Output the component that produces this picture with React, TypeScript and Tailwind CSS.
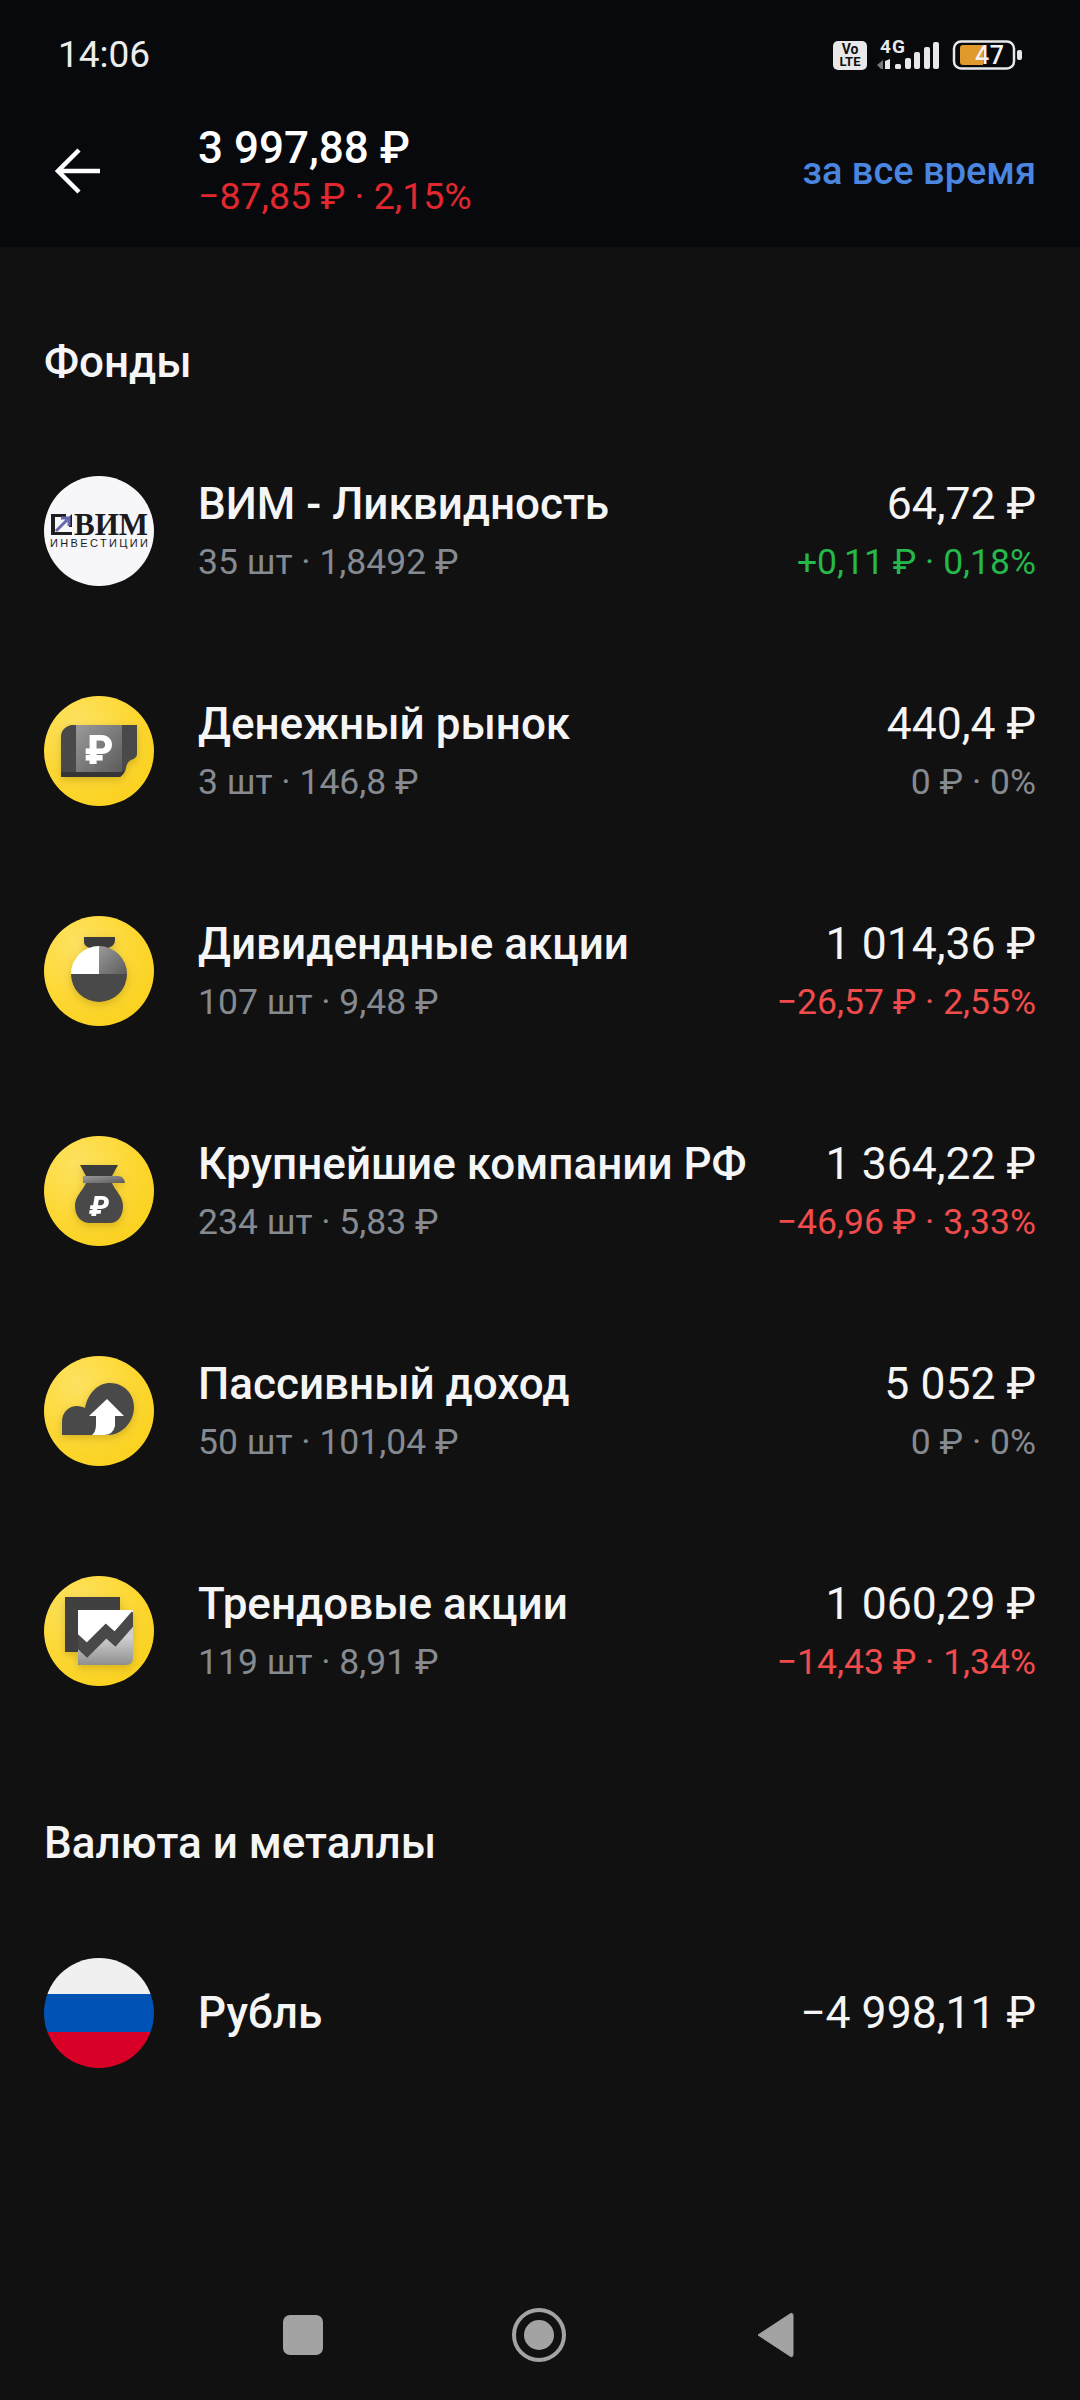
import type { ReactNode } from "react";

type Fund = {
  name: string;
  sub: string;
  total: string;
  change: string;
  tone: "up" | "down" | "flat";
  icon: ReactNode;
};

function YellowDisc({ id, children }: { id: string; children: ReactNode }) {
  return (
    <svg width="110" height="110" viewBox="0 0 110 110" className="shrink-0">
      <defs>
        <radialGradient id={`${id}-bg`} cx="30%" cy="25%" r="80%">
          <stop offset="0" stopColor="#fde261" />
          <stop offset="0.6" stopColor="#fdd835" />
          <stop offset="1" stopColor="#fbd221" />
        </radialGradient>
        <linearGradient id={`${id}-grey`} x1="0" y1="0" x2="1" y2="1">
          <stop offset="0" stopColor="#9a9a9a" />
          <stop offset="1" stopColor="#5c5c5c" />
        </linearGradient>
        <filter id={`${id}-shadow`} x="-20%" y="-20%" width="140%" height="150%">
          <feDropShadow dx="0" dy="3" stdDeviation="4" floodColor="#8a6a00" floodOpacity="0.35" />
        </filter>
      </defs>
      <circle cx="55" cy="55" r="55" fill={`url(#${id}-bg)`} />
      <g filter={`url(#${id}-shadow)`}>{children}</g>
    </svg>
  );
}

function VimIcon() {
  return (
    <svg width="110" height="110" viewBox="0 0 110 110" className="shrink-0">
      <circle cx="55" cy="55" r="55" fill="#f7f7fa" />
      <path d="M7 38H22V41H11V56H28V59H7Z" fill="#1d1d22" />
      <path d="M28 38V51H25V41Z" fill="#1d1d22" />
      <path d="M11 54V45L14 42H23L11 54Z" fill="#f7f7fa" />
      <path d="M12 55L24 43M17 42H25V50" fill="none" stroke="#6a68b0" strokeWidth="3" />
      <text x="30" y="59" fontFamily="Liberation Serif" fontSize="31" fontWeight="700" fill="#1b1b1f" textLength="74" lengthAdjust="spacingAndGlyphs">
        ВИМ
      </text>
      <text x="6" y="71" fontFamily="Liberation Sans" fontSize="11" fill="#1b1b1f" textLength="98">
        ИНВЕСТИЦИИ
      </text>
    </svg>
  );
}

function MoneyIcon() {
  return (
    <YellowDisc id="money">
      <path d="M27 29H93V58Q93 62 87 64Q83 66 82 72Q81 78 76 81H17V40Q17 32 27 29Z" fill="#4a4a4a" />
      <path d="M17 76H77Q80 76 81 72Q80 78 76 81H17Z" fill="#363636" />
      <rect x="32" y="29" width="46" height="47" fill={`url(#money-grey)`} />
      <text x="55" y="68" textAnchor="middle" fontFamily="Roboto" fontSize="40" fontWeight="900" fill="#fff">
        ₽
      </text>
    </YellowDisc>
  );
}

function DividendIcon() {
  return (
    <YellowDisc id="div">
      <path d="M40 21H71V24Q71 30 64 32H46Q40 30 40 26Z" fill="#3a3a3a" />
      <path d="M27 58A28 28 0 0 0 83 58Z" fill="#484848" />
      <path d="M55 58V30A28 28 0 0 1 83 58Z" fill={`url(#div-grey)`} />
      <path d="M55 58V30A28 28 0 0 0 27 58Z" fill="#fff" />
    </YellowDisc>
  );
}

function BagIcon() {
  return (
    <YellowDisc id="bag">
      <path d="M36 29H74L68 40H42Z" fill="#3a3a3a" />
      <path d="M42 47C38 56 31 60 31 70C31 81 38 87 46 87H66C73 87 79 81 79 70C79 60 72 56 68 47Z" fill="#484848" />
      <path d="M39 40H74Q80 40 81 47H39Z" fill={`url(#bag-grey)`} />
      <text x="55" y="80" textAnchor="middle" fontFamily="Roboto" fontSize="28" fontWeight="900" fontStyle="italic" fill="#fff">
        ₽
      </text>
    </YellowDisc>
  );
}

function CloudIcon() {
  return (
    <YellowDisc id="cloud">
      <path d="M18 79V66C18 56 25 50 33 50C36 50 39 51 41 52C44 37 54 27 66 27C80 27 90 38 90 51C90 66 78 79 64 79Z" fill="#484848" />
      <path d="M63 43L80 60H71V70Q69 79 60 79H48Q52 76 52 68V60H45Z" fill="#fff" />
    </YellowDisc>
  );
}

function TrendIcon() {
  return (
    <YellowDisc id="trend">
      <rect x="21" y="21" width="55" height="55" fill="#3f3f3f" />
      <defs>
        <linearGradient id="trend-card" x1="0" y1="0" x2="0" y2="1">
          <stop offset="0.5" stopColor="#cfcfcf" />
          <stop offset="1" stopColor="#8f8f8f" />
        </linearGradient>
        <clipPath id="trend-clip">
          <path d="M34 34H89V82Q89 89 82 89H34Z" />
        </clipPath>
      </defs>
      <g clipPath="url(#trend-clip)">
        <path d="M34 34H89V89H34Z" fill={`url(#trend-card)`} />
        <path d="M34 34H89V41L71 62L62 54L43 72L34 64Z" fill="#fff" />
        <path d="M30 62L43 74L62 55L71 63L92 39" fill="none" stroke="#484848" strokeWidth="11" />
      </g>
    </YellowDisc>
  );
}

function FlagIcon() {
  return (
    <svg width="110" height="110" viewBox="0 0 110 110" className="shrink-0">
      <clipPath id="flag-clip">
        <circle cx="55" cy="55" r="55" />
      </clipPath>
      <g clipPath="url(#flag-clip)">
        <rect width="110" height="36" fill="#f0f0f0" />
        <rect y="36" width="110" height="38" fill="#0052b4" />
        <rect y="74" width="110" height="36" fill="#d80027" />
      </g>
    </svg>
  );
}

const funds: Fund[] = [
  { name: "ВИМ - Ликвидность", sub: "35 шт · 1,8492 ₽", total: "64,72 ₽", change: "+0,11 ₽ · 0,18%", tone: "up", icon: <VimIcon /> },
  { name: "Денежный рынок", sub: "3 шт · 146,8 ₽", total: "440,4 ₽", change: "0 ₽ · 0%", tone: "flat", icon: <MoneyIcon /> },
  { name: "Дивидендные акции", sub: "107 шт · 9,48 ₽", total: "1 014,36 ₽", change: "−26,57 ₽ · 2,55%", tone: "down", icon: <DividendIcon /> },
  { name: "Крупнейшие компании РФ", sub: "234 шт · 5,83 ₽", total: "1 364,22 ₽", change: "−46,96 ₽ · 3,33%", tone: "down", icon: <BagIcon /> },
  { name: "Пассивный доход", sub: "50 шт · 101,04 ₽", total: "5 052 ₽", change: "0 ₽ · 0%", tone: "flat", icon: <CloudIcon /> },
  { name: "Трендовые акции", sub: "119 шт · 8,91 ₽", total: "1 060,29 ₽", change: "−14,43 ₽ · 1,34%", tone: "down", icon: <TrendIcon /> },
];

function StatusIcons() {
  return (
    <svg width="189" height="42" viewBox="0 -4 189 42">
      {/* volte */}
      <rect x="0" y="3" width="34" height="29" rx="5" fill="#e8e8e8" />
      <text x="17" y="16" textAnchor="middle" fontFamily="Roboto" fontSize="14" fontWeight="700" fill="#111">Vo</text>
      <text x="17" y="28" textAnchor="middle" fontFamily="Roboto" fontSize="13" fontWeight="700" fill="#111">LTE</text>
      {/* 4g + signal */}
      <text x="47" y="15" fontFamily="Roboto" fontSize="19" fontWeight="700" fill="#e8e8e8" textLength="25">4G</text>
      <path d="M44 27l6-5v9h-2z" fill="#777" />
      <path d="M52 23l5-2v10h-5z" fill="#e8e8e8" />
      <rect x="62" y="26" width="6" height="5" rx="1.5" fill="#e8e8e8" />
      <rect x="72" y="20" width="6" height="11" rx="2" fill="#e8e8e8" />
      <rect x="81" y="14" width="6" height="17" rx="2" fill="#e8e8e8" />
      <rect x="91" y="9" width="6" height="22" rx="2" fill="#e8e8e8" />
      <rect x="100" y="4" width="6" height="27" rx="2" fill="#e8e8e8" />
      {/* battery */}
      <rect x="121" y="3.5" width="60" height="27" rx="7" fill="none" stroke="#e8e8e8" strokeWidth="2.5" />
      <path d="M130 7h20v20h-20q-3 0-3-3v-14q0-3 3-3z" fill="#e09a2c" />
      <text x="142" y="26" fontFamily="Roboto" fontSize="25" fontWeight="500" fill="#f2f2f2" textLength="29">47</text>
      <rect x="184" y="12" width="5" height="10" rx="2" fill="#e8e8e8" />
    </svg>
  );
}

function FundRow({ fund }: { fund: Fund }) {
  const changeColor =
    fund.tone === "up" ? "text-[#25b84a]" : fund.tone === "down" ? "text-[#f04c4c]" : "text-[#868a91]";
  return (
    <div className="flex h-[220px] items-center">
      {fund.icon}
      <div className="ml-[44px] flex-1 pt-[3px] whitespace-nowrap">
        <div className="text-[44px] leading-[56px] font-medium text-[#f5f5f5]">{fund.name}</div>
        <div className="mt-[2px] text-[35.5px] leading-[56px] text-[#868a91]">{fund.sub}</div>
      </div>
      <div className="pt-[3px] text-right whitespace-nowrap">
        <div className="text-[44.5px] leading-[56px] text-[#f5f5f5]">{fund.total}</div>
        <div className={`mt-[2px] text-[35.5px] leading-[56px] ${changeColor}`}>{fund.change}</div>
      </div>
    </div>
  );
}

export default function App() {
  return (
    <div className="flex h-[2400px] w-[1080px] flex-col overflow-hidden bg-[#111112] font-['Roboto',sans-serif]">
      {/* Top bar */}
      <div className="h-[247px] bg-[#07090c]">
        <div className="flex h-[108px] items-center justify-between pt-[2px] pr-[58px] pl-[58px]">
          <span className="text-[37px] text-[#ececec]">14:06</span>
          <StatusIcons />
        </div>
        <div className="flex h-[120px] items-center pt-[6px] pr-[44px] pl-[55px]">
          <svg width="45" height="46" viewBox="0 0 45 46" fill="none" stroke="#fff" strokeWidth="4.5" className="shrink-0">
            <path d="M45 23H4M24 2L3 23L24 44" />
          </svg>
          <div className="ml-[98px] flex-1">
            <div className="text-[44px] leading-[50px] font-medium text-white">3 997,88 ₽</div>
            <div className="text-[37.5px] leading-[46px] text-[#e0282e]">−87,85 ₽ · 2,15%</div>
          </div>
          <span className="text-[38px] font-medium text-[#4a86e0]">за все время</span>
        </div>
      </div>

      <div className="px-[44px]">
        <h2 className="mt-[85px] mb-[29px] text-[44px] leading-[60px] font-medium text-[#f5f5f5]">Фонды</h2>
        {funds.map((fund) => (
          <FundRow key={fund.name} fund={fund} />
        ))}

        <h2 className="mt-[72px] mb-[30px] text-[44px] leading-[60px] font-medium text-[#f5f5f5]">Валюта и металлы</h2>
        <div className="flex h-[220px] items-center">
          <FlagIcon />
          <span className="ml-[44px] flex-1 text-[44px] font-medium text-[#f5f5f5]">Рубль</span>
          <span className="text-[44.5px] text-[#f5f5f5]">−4 998,11 ₽</span>
        </div>
      </div>

      {/* Android nav */}
      <div className="mt-[152px] flex h-[120px] items-center pl-[283px]">
        <div className="h-[40px] w-[40px] rounded-[7px] bg-[#a3a3a3]" />
        <div className="ml-[189px] flex h-[54px] w-[54px] items-center justify-center rounded-full border-[4px] border-[#a3a3a3]">
          <div className="h-[30px] w-[30px] rounded-full bg-[#a3a3a3]" />
        </div>
        <svg width="38" height="46" viewBox="0 0 38 46" className="ml-[190px]">
          <path d="M34 2L2 23L34 44Q37 46 37 42V4Q37 0 34 2Z" fill="#a3a3a3" stroke="#a3a3a3" strokeLinejoin="round" />
        </svg>
      </div>
    </div>
  );
}
